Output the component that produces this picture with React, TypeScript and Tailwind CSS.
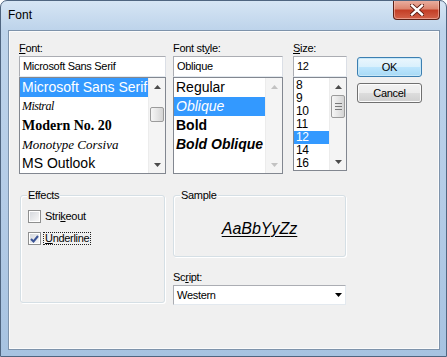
import React from "react";

const ui = "font-['Liberation_Sans',Arial,sans-serif]";

function Label({ pre, k, post }: { pre?: string; k: string; post: string }) {
  return (
    <div className="h-[16px] leading-[16px] text-[11px] tracking-[-0.3px] whitespace-nowrap">
      {pre}
      <span className="underline underline-offset-[1px]">{k}</span>
      {post}
    </div>
  );
}

function Arrow({ dir, disabled }: { dir: "up" | "down"; disabled?: boolean }) {
  return (
    <div className="h-[17px] flex items-center justify-center">
      <svg width="7" height="4" viewBox="0 0 7 4">
        <path
          d={dir === "up" ? "M3.5 0 L7 4 L0 4 Z" : "M0 0 L7 0 L3.5 4 Z"}
          fill={disabled ? "#c2c2c2" : "#4b4b4b"}
        />
      </svg>
    </div>
  );
}

function ScrollBar({
  disabled,
  thumbTop,
  thumbH,
  grip,
}: {
  disabled?: boolean;
  thumbTop?: number;
  thumbH?: number;
  grip?: boolean;
}) {
  return (
    <div className="w-[17px] h-full flex flex-col bg-[#f4f4f4] border-l border-[#ececec]">
      <Arrow dir="up" disabled={disabled} />
      <div className="flex-1 px-[1px]">
        {!disabled && (
          <div
            className="rounded-[2px] border border-[#9b9b9b] bg-[linear-gradient(90deg,#f6f6f6,#e4e4e4_55%,#d4d4d4)] flex flex-col items-center justify-center gap-[2px]"
            style={{ marginTop: thumbTop, height: thumbH }}
          >
            {grip && (
              <>
                <div className="w-[7px] h-[1px] bg-[#7a7a7a]" />
                <div className="w-[7px] h-[1px] bg-[#7a7a7a]" />
                <div className="w-[7px] h-[1px] bg-[#7a7a7a]" />
              </>
            )}
          </div>
        )}
      </div>
      <Arrow dir="down" disabled={disabled} />
    </div>
  );
}

function TextBox({ value, w }: { value: string; w: string }) {
  return (
    <div
      className={`${w} h-[21px] bg-white border border-[#abadb3] border-b-[#e3e9ef] border-r-[#dbdfe6] pl-[3px] text-[11px] leading-[19px] tracking-[-0.3px]`}
    >
      {value}
    </div>
  );
}

function CheckBox({ checked }: { checked?: boolean }) {
  return (
    <div className="w-[13px] h-[13px] border border-[#8e8f8f] bg-white p-[1px] shrink-0">
      <div className="w-full h-full bg-[linear-gradient(135deg,#d6d9de,#f7f7f7)] flex items-center justify-center">
        {checked && (
          <svg width="9" height="8" viewBox="0 0 9 8">
            <path d="M1 4 L3.5 6.5 L8 1" stroke="#3a5396" strokeWidth="2" fill="none" />
          </svg>
        )}
      </div>
    </div>
  );
}

function Group({
  title,
  className,
  children,
}: {
  title: string;
  className: string;
  children?: React.ReactNode;
}) {
  return (
    <div
      className={`relative border border-[#d5dfe5] rounded-[3px] shadow-[inset_1px_1px_0_#fff,1px_1px_0_#fff] ${className}`}
    >
      <div className="absolute -top-[8px] left-[6px] px-[1px] bg-[#f0f0f0] text-[11px] leading-[14px] tracking-[-0.3px]">
        {title}
      </div>
      {children}
    </div>
  );
}

const fonts = [
  { name: "Microsoft Sans Serif", cls: "text-[14px] font-['Liberation_Sans',sans-serif]" },
  { name: "Mistral", cls: "text-[12px] italic font-['Liberation_Serif',serif] tracking-[-0.5px]" },
  { name: "Modern No. 20", cls: "text-[14px] font-bold font-['Liberation_Serif',serif]" },
  { name: "Monotype Corsiva", cls: "text-[13px] italic font-['Liberation_Serif',serif]" },
  { name: "MS Outlook", cls: "text-[14px] font-['Liberation_Sans',sans-serif]" },
];

const styles = [
  { name: "Regular", cls: "" },
  { name: "Oblique", cls: "italic" },
  { name: "Bold", cls: "font-bold" },
  { name: "Bold Oblique", cls: "font-bold italic" },
];

const sizes = ["8", "9", "10", "11", "12", "14", "16"];

export default function App() {
  return (
    <div
      className={`${ui} relative w-[447px] h-[357px] flex flex-col rounded-t-[7px] border border-[#4f6580] bg-[linear-gradient(180deg,#d6e5f4_0%,#bed4eb_8%,#b3cbe6_60%,#a7c3e1_100%)] text-black overflow-hidden`}
    >
      {/* Title bar */}
      <div className="h-[29px] pl-[7px] pt-[6px] text-[12px] leading-[16px]">Font</div>

      {/* Close button */}
      <div className="absolute -top-[1px] right-[6px] w-[47px] h-[20px] rounded-b-[4px] border border-[#5c2016] border-t-0 bg-[linear-gradient(180deg,#eab2a4_0%,#dd8771_45%,#c43f27_55%,#d3624a_100%)] shadow-[inset_0_0_0_1px_rgba(255,210,200,0.5)] flex items-center justify-center">
        <svg width="14" height="12" viewBox="0 0 14 12">
          <path d="M2 1.5 L12 10.5 M12 1.5 L2 10.5" stroke="#5a1a10" strokeWidth="4.2" strokeLinecap="square" />
          <path d="M2 1.5 L12 10.5 M12 1.5 L2 10.5" stroke="#ffffff" strokeWidth="2.4" strokeLinecap="square" />
        </svg>
      </div>

      {/* Client area */}
      <div className="ml-[7px] w-[432px] h-[320px] border border-[#7e93ab] bg-[#f0f0f0] shadow-[inset_0_0_0_1px_#fbfbfb]">
        <div className="flex pl-[10px] pt-[9px]">
          {/* Font column */}
          <div className="w-[147px] flex flex-col">
            <Label k="F" post="ont:" />
            <TextBox value="Microsoft Sans Serif" w="w-[147px]" />
            <div className="h-[97px] bg-white border border-[#828790] flex">
              <div className="flex-1 overflow-hidden">
                {fonts.map((f, i) => (
                  <div
                    key={f.name}
                    className={`h-[19px] leading-[19px] pl-[2px] whitespace-nowrap ${f.cls} ${
                      i === 0 ? "bg-[#3399ff] text-white" : ""
                    }`}
                  >
                    {f.name}
                  </div>
                ))}
              </div>
              <ScrollBar thumbTop={12} thumbH={15} />
            </div>

            <Group title="Effects" className="mt-[21px] ml-[1px] w-[145px] h-[108px] pl-[7px] pt-[14px]">
              <div className="flex items-center h-[13px] gap-[3px] text-[11px] tracking-[-0.3px]">
                <CheckBox />
                <span className="pl-[1px]">
                  Stri<span className="underline underline-offset-[1px]">k</span>eout
                </span>
              </div>
              <div className="flex items-center h-[13px] gap-[2px] mt-[9px] text-[11px] tracking-[-0.3px]">
                <CheckBox checked />
                <span className="border border-dotted border-[#222] px-[1px] leading-[11px]">
                  <span className="underline underline-offset-[1px]">U</span>nderline
                </span>
              </div>
            </Group>
          </div>

          {/* Style + size column */}
          <div className="ml-[7px] w-[174px] flex flex-col">
            <div className="flex">
              <div className="w-[110px] flex flex-col">
                <Label pre="Font st" k="y" post="le:" />
                <TextBox value="Oblique" w="w-[110px]" />
                <div className="h-[97px] bg-white border border-[#828790] flex">
                  <div className="flex-1 overflow-hidden">
                    {styles.map((s, i) => (
                      <div
                        key={s.name}
                        className={`h-[19px] leading-[19px] pl-[2px] whitespace-nowrap text-[14px] ${s.cls} ${
                          i === 1 ? "bg-[#3399ff] text-white" : ""
                        }`}
                      >
                        {s.name}
                      </div>
                    ))}
                  </div>
                  <ScrollBar disabled />
                </div>
              </div>

              <div className="ml-[10px] w-[54px] flex flex-col">
                <Label k="S" post="ize:" />
                <TextBox value="12" w="w-[54px]" />
                <div className="h-[94px] bg-white border border-[#828790] flex">
                  <div className="flex-1 overflow-hidden pt-[1px]">
                    {sizes.map((s) => (
                      <div
                        key={s}
                        className={`h-[13px] leading-[13px] pl-[2px] text-[12px] tracking-[-0.4px] ${
                          s === "12" ? "bg-[#3399ff] text-white" : ""
                        }`}
                      >
                        {s}
                      </div>
                    ))}
                  </div>
                  <ScrollBar thumbTop={0} thumbH={23} grip />
                </div>
              </div>
            </div>

            <Group title="Sample" className="mt-[21px] w-[173px] h-[62px] flex items-center justify-center pt-[6px]">
              <span className="text-[16px] italic underline underline-offset-[2px] decoration-1">AaBbYyZz</span>
            </Group>

            <div className="mt-[12px]">
              <Label pre="Sc" k="r" post="ipt:" />
            </div>
            <div className="w-[173px] h-[20px] bg-white border border-[#abadb3] border-r-[#e3e9ef] border-b-[#e3e9ef] flex items-center justify-between pl-[3px] pr-[3px] text-[11px] tracking-[-0.3px]">
              <span>Western</span>
              <svg width="7" height="4" viewBox="0 0 7 4">
                <path d="M0 0 L7 0 L3.5 4 Z" fill="#000" />
              </svg>
            </div>
          </div>

          {/* Buttons */}
          <div className="ml-[10px] w-[65px] flex flex-col pt-[17px]">
            <button className="h-[20px] rounded-[3px] border border-[#3c7fb1] bg-[linear-gradient(180deg,#eaf6fd_0%,#d9f0fc_50%,#bee6fd_50%,#a7d9f5_100%)] shadow-[inset_0_0_0_1px_#c6e7f8] text-[11px] tracking-[-0.3px] leading-[18px]">
              OK
            </button>
            <button className="mt-[6px] h-[20px] rounded-[3px] border border-[#707070] bg-[linear-gradient(180deg,#f2f2f2_0%,#ebebeb_50%,#dddddd_50%,#cfcfcf_100%)] shadow-[inset_0_0_0_1px_#fcfcfc] text-[11px] tracking-[-0.3px] leading-[18px]">
              Cancel
            </button>
          </div>
        </div>
      </div>
    </div>
  );
}
